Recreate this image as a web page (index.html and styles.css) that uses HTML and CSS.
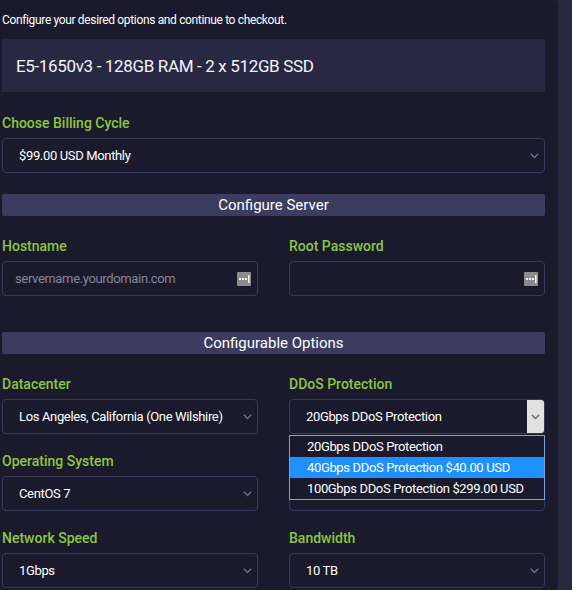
FILE: index.html
```html
<!DOCTYPE html>
<html lang="en">
<head>
<meta charset="utf-8">
<title>Configure Server</title>
<link rel="stylesheet" href="styles.css">
</head>
<body>
<div class="panel">
  <p class="intro">Configure your desired options and continue to checkout.</p>

  <div class="product">E5-1650v3 - 128GB RAM - 2 x 512GB SSD</div>

  <div class="field billing">
    <label>Choose Billing Cycle</label>
    <div class="select">
      <span>$99.00 USD Monthly</span>
      <svg class="chev" width="9" height="6" viewBox="0 0 9 6"><polyline points="0.8,0.8 4.5,4.6 8.2,0.8" fill="none" stroke="#6e6f86" stroke-width="1.4"/></svg>
    </div>
  </div>

  <div class="section-bar first">Configure Server</div>

  <div class="row top">
    <div class="field">
      <label>Hostname</label>
      <div class="input">
        <span class="placeholder">servername.yourdomain.com</span>
        <svg class="key" width="14" height="14" viewBox="0 0 14 14"><rect width="14" height="14" rx="1" fill="#8b8b8e"/><rect x="2" y="6" width="2" height="2" fill="#f0f0f0"/><rect x="5" y="6" width="2" height="2" fill="#f0f0f0"/><rect x="8" y="6" width="2" height="2" fill="#f0f0f0"/><rect x="11" y="3" width="1.6" height="8" fill="#f0f0f0"/></svg>
      </div>
    </div>
    <div class="field">
      <label>Root Password</label>
      <div class="input">
        <svg class="key" width="14" height="14" viewBox="0 0 14 14"><rect width="14" height="14" rx="1" fill="#8b8b8e"/><rect x="2" y="6" width="2" height="2" fill="#f0f0f0"/><rect x="5" y="6" width="2" height="2" fill="#f0f0f0"/><rect x="8" y="6" width="2" height="2" fill="#f0f0f0"/><rect x="11" y="3" width="1.6" height="8" fill="#f0f0f0"/></svg>
      </div>
    </div>
  </div>

  <div class="section-bar second">Configurable Options</div>

  <div class="row top">
    <div class="field">
      <label>Datacenter</label>
      <div class="select">
        <span>Los Angeles, California (One Wilshire)</span>
        <svg class="chev" width="9" height="6" viewBox="0 0 9 6"><polyline points="0.8,0.8 4.5,4.6 8.2,0.8" fill="none" stroke="#6e6f86" stroke-width="1.4"/></svg>
      </div>
    </div>
    <div class="field">
      <label>DDoS Protection</label>
      <div class="select open">
        <span>20Gbps DDoS Protection</span>
        <span class="arrow-box">
          <svg width="9" height="6" viewBox="0 0 9 6"><polyline points="0.8,0.8 4.5,4.6 8.2,0.8" fill="none" stroke="#6d6d6d" stroke-width="1.4"/></svg>
        </span>
        <ul class="dropdown">
          <li>20Gbps DDoS Protection</li>
          <li class="active">40Gbps DDoS Protection $40.00 USD</li>
          <li>100Gbps DDoS Protection $299.00 USD</li>
        </ul>
      </div>
    </div>
  </div>

  <div class="row">
    <div class="field">
      <label>Operating System</label>
      <div class="select">
        <span>CentOS 7</span>
        <svg class="chev" width="9" height="6" viewBox="0 0 9 6"><polyline points="0.8,0.8 4.5,4.6 8.2,0.8" fill="none" stroke="#6e6f86" stroke-width="1.4"/></svg>
      </div>
    </div>
    <div class="field">
      <label class="empty"></label>
      <div class="select"></div>
    </div>
  </div>

  <div class="row">
    <div class="field">
      <label>Network Speed</label>
      <div class="select">
        <span>1Gbps</span>
        <svg class="chev" width="9" height="6" viewBox="0 0 9 6"><polyline points="0.8,0.8 4.5,4.6 8.2,0.8" fill="none" stroke="#6e6f86" stroke-width="1.4"/></svg>
      </div>
    </div>
    <div class="field">
      <label>Bandwidth</label>
      <div class="select">
        <span>10 TB</span>
        <svg class="chev" width="9" height="6" viewBox="0 0 9 6"><polyline points="0.8,0.8 4.5,4.6 8.2,0.8" fill="none" stroke="#6e6f86" stroke-width="1.4"/></svg>
      </div>
    </div>
  </div>
</div>
</body>
</html>
```

FILE: styles.css
```css
html, body {
  margin: 0;
  padding: 0;
  background: #27283f;
}

body {
  font-family: Roboto, "Liberation Sans", sans-serif;
  color: #ffffff;
  letter-spacing: -0.35px;
}

.panel {
  width: 543px;
  min-height: 600px;
  padding: 13px 13px 0 2px;
  background: #1a1a2c;
  border-top-right-radius: 4px;
}

.intro {
  margin: 0;
  font-size: 12px;
  line-height: 14px;
  color: #ffffff;
}

.product {
  margin-top: 12px;
  height: 53px;
  padding-left: 14px;
  display: flex;
  align-items: center;
  background: #282843;
  font-size: 17px;
  color: #f4f4f8;
}

.field {
  display: flex;
  flex-direction: column;
}

.field label {
  display: block;
  min-height: 20px;
  font-size: 14px;
  font-weight: 500;
  line-height: 20px;
  letter-spacing: 0;
  margin-bottom: 5px;
  color: #8dc63f;
}

.billing {
  margin-top: 21px;
}

.select,
.input {
  position: relative;
  box-sizing: border-box;
  height: 35px;
  display: flex;
  align-items: center;
  border: 1px solid #38395a;
  border-radius: 4px;
  font-size: 13px;
  color: #ffffff;
}

.select {
  padding-left: 16px;
}

.input {
  padding-left: 12px;
}

.chev {
  margin-left: auto;
  margin-right: 5px;
}

.key {
  margin-left: auto;
  margin-right: 6px;
}

.placeholder {
  color: #85869a;
}

.select.open .arrow-box {
  margin-left: auto;
  align-self: stretch;
  width: 17px;
  display: flex;
  align-items: center;
  justify-content: center;
  background: #e1e1e1;
  border-radius: 0 3px 3px 0;
}

.section-bar {
  height: 22px;
  line-height: 22px;
  text-align: center;
  background: #3b3c60;
  border-radius: 2px;
  font-size: 15px;
  letter-spacing: 0;
  color: #ffffff;
}

.section-bar.first {
  margin-top: 21px;
}

.section-bar.second {
  margin-top: 36px;
}

.row {
  display: grid;
  grid-template-columns: 256px 256px;
  column-gap: 31px;
  margin-top: 17px;
}

.row.top {
  margin-top: 20px;
}

/* open option list of the DDoS select, drawn over the row below */
.dropdown {
  position: absolute;
  left: -1px;
  right: -1px;
  top: 35px;
  margin: 0;
  padding: 0;
  list-style: none;
  border: 1px solid #7f9fd6;
  background: #1a1a2c;
  z-index: 5;
}

.dropdown li {
  height: 21px;
  line-height: 21px;
  padding-left: 17px;
  font-size: 13px;
  color: #ffffff;
}

.dropdown li.active {
  background: #1e90ff;
}
```
